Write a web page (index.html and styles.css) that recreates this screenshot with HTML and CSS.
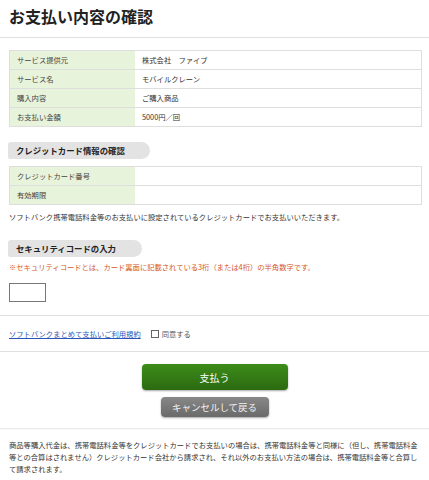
FILE: index.html
```html
<!DOCTYPE html>
<html lang="ja">
<head>
    <meta charset="UTF-8">
    <meta name="viewport" content="width=device-width, initial-scale=1.0">
    <title>お支払い内容の確認</title>
    <link rel="stylesheet" href="styles.css">
</head>
<body>
    <div class="page-head">
        <h1>お支払い内容の確認</h1>
    </div>
    <div class="content">
        <table class="info-table">
            <tr><th>サービス提供元</th><td>株式会社　ファイブ</td></tr>
            <tr><th>サービス名</th><td>モバイルクレーン</td></tr>
            <tr><th>購入内容</th><td>ご購入商品</td></tr>
            <tr><th>お支払い金額</th><td>5000円／回</td></tr>
        </table>

        <h2 class="section-title">クレジットカード情報の確認</h2>
        <table class="info-table info-table-card">
            <tr><th>クレジットカード番号</th><td></td></tr>
            <tr><th>有効期限</th><td></td></tr>
        </table>
        <p class="note">ソフトバンク携帯電話料金等のお支払いに設定されているクレジットカードでお支払いいただきます。</p>

        <h2 class="section-title section-title-short">セキュリティコードの入力</h2>
        <p class="note note-alert">※セキュリティコードとは、カード裏面に記載されている3桁（または4桁）の半角数字です。</p>
        <input type="text" class="code-input" maxlength="4">
    </div>

    <div class="agree-row">
        <a href="#">ソフトバンクまとめて支払いご利用規約</a>
        <label class="agree-check"><input type="checkbox"><span>同意する</span></label>
    </div>

    <div class="buttons">
        <button class="btn btn-pay">支払う</button>
        <button class="btn btn-cancel">キャンセルして戻る</button>
    </div>

    <div class="footer-note">
        <p>商品等購入代金は、携帯電話料金等をクレジットカードでお支払いの場合は、携帯電話料金等と同様に（但し、携帯電話料金等との合算はされません）クレジットカード会社から請求され、それ以外のお支払い方法の場合は、携帯電話料金等と合算して請求されます。</p>
    </div>
</body>
</html>
```

FILE: styles.css
```css
body {
    margin: 0;
    padding: 0;
    font-family: "Noto Sans CJK JP", "Noto Sans", sans-serif;
    font-size: 7.3px;
    color: #333;
    background-color: #fff;
}
.page-head {
    height: 38px;
    border-bottom: 1px solid #e0e0e0;
    padding: 0 9px;
    box-sizing: border-box;
}
.page-head h1 {
    margin: 0;
    padding-top: 6px;
    font-size: 16px;
    line-height: 20px;
    font-weight: bold;
    color: #222;
}
.content {
    padding: 12px 7px 0 9px;
}
.info-table {
    width: 413px;
    border-collapse: collapse;
    border: 1px solid #dedede;
}
.info-table th,
.info-table td {
    height: 18px;
    padding: 0 7px;
    border-top: 1px solid #dedede;
    text-align: left;
    font-weight: normal;
    font-size: 7.3px;
    vertical-align: middle;
}
.info-table th {
    width: 111px;
    background-color: #e7f3da;
    color: #444;
}
.info-table td {
    background-color: #fff;
}
.section-title {
    width: 142px;
    height: 17px;
    margin: 15px 0 7px -1px;
    padding-left: 8px;
    box-sizing: border-box;
    background-color: #e3e3e3;
    border-radius: 3px 9px 9px 3px;
    font-size: 8.4px;
    line-height: 17px;
    font-weight: bold;
    color: #222;
}
.section-title-short {
    width: 134px;
    margin-top: 17px;
    margin-bottom: 4px;
}
.note {
    margin: 6px 0 0;
    line-height: 12px;
}
.note-alert {
    margin-top: 0;
    color: #d4572b;
}
.code-input {
    display: block;
    width: 37px;
    height: 19px;
    margin: 10px 0 0;
    padding: 0;
    box-sizing: border-box;
    border: 1px solid #777;
    border-radius: 0;
}
.agree-row {
    display: flex;
    align-items: center;
    height: 35px;
    margin-top: 13px;
    padding: 0 9px;
    border-top: 1px solid #e0e0e0;
    border-bottom: 1px solid #e0e0e0;
}
.agree-row a {
    color: #2b55b8;
    text-decoration: underline;
    margin-right: 10px;
}
.agree-check {
    display: flex;
    align-items: center;
    color: #555;
}
.agree-check input {
    width: 8px;
    height: 8px;
    margin: 0 3px 0 0;
    appearance: none;
    border: 1px solid #666;
    background: #fff;
}
.buttons {
    display: flex;
    flex-direction: column;
    align-items: center;
    padding: 12px 0 11px;
    border-bottom: 1px solid #ececec;
    box-shadow: 0 1px 1px rgba(0, 0, 0, 0.03);
}
.btn {
    border: none;
    font-family: "Noto Sans CJK JP", sans-serif;
    color: #fff;
    cursor: pointer;
    box-shadow: 0 1px 2px rgba(0, 0, 0, 0.35);
}
.btn-pay {
    width: 146px;
    height: 26px;
    font-size: 10px;
    border-radius: 4px;
    background: linear-gradient(#3c8c19, #2c6a11);
}
.btn-cancel {
    width: 108px;
    height: 20px;
    margin-top: 7px;
    font-size: 9.5px;
    border-radius: 4px;
    color: #f2f2f2;
    background: linear-gradient(#888, #6a6a6a);
}
.footer-note {
    padding: 10px 9px 0;
}
.footer-note p {
    margin: 0;
    line-height: 12px;
    color: #333;
}
```
